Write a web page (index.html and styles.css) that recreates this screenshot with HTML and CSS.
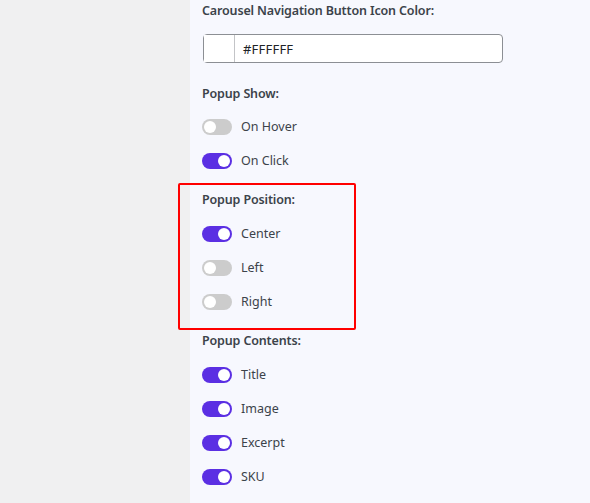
FILE: index.html
```html
<!DOCTYPE html>
<html>
<head>
<meta charset="utf-8">
<link rel="stylesheet" href="styles.css">
</head>
<body>
<div class="page">
  <aside class="side"></aside>
  <main class="panel">
    <section class="group first">
      <h3 class="heading">Carousel Navigation Button Icon Color:</h3>
      <div class="color-input">
        <span class="swatch"></span>
        <span class="value">#FFFFFF</span>
      </div>
    </section>

    <section class="group">
      <h3 class="heading">Popup Show:</h3>
      <div class="options tight">
        <label class="opt"><span class="toggle"></span>On Hover</label>
        <label class="opt"><span class="toggle on"></span>On Click</label>
      </div>
    </section>

    <section class="group highlighted">
      <h3 class="heading">Popup Position:</h3>
      <div class="options">
        <label class="opt"><span class="toggle on"></span>Center</label>
        <label class="opt"><span class="toggle"></span>Left</label>
        <label class="opt"><span class="toggle"></span>Right</label>
      </div>
    </section>

    <section class="group">
      <h3 class="heading">Popup Contents:</h3>
      <div class="options">
        <label class="opt"><span class="toggle on"></span>Title</label>
        <label class="opt"><span class="toggle on"></span>Image</label>
        <label class="opt"><span class="toggle on"></span>Excerpt</label>
        <label class="opt"><span class="toggle on"></span>SKU</label>
      </div>
    </section>
  </main>
</div>
</body>
</html>
```

FILE: styles.css
```css
* { box-sizing: border-box; }
html, body { margin: 0; padding: 0; }
body {
  background: #f0f0f1;
  font-family: "Noto Sans", "Open Sans", "DejaVu Sans", sans-serif;
  font-size: 12.5px;
  color: #3c434a;
  width: 590px;
  height: 503px;
  overflow: hidden;
}
.page {
  display: flex;
  height: 503px;
}
.side {
  width: 190px;
  flex: none;
  background: #f0f0f1;
}
.panel {
  flex: 1;
  background: #f7f8fe;
  padding: 1px 0 0 12px;
  display: flex;
  flex-direction: column;
  gap: 19px;
}
.panel .group.first + .group { margin-top: 2px; }
.group { position: relative; }
.heading {
  margin: 0;
  font-size: 12.5px;
  line-height: 20px;
  font-weight: 600;
  letter-spacing: -0.15px;
  color: #3c434a;
}
.color-input {
  margin-top: 13px;
  margin-left: 1px;
  width: 300px;
  height: 29px;
  border: 1px solid #8c8f94;
  border-radius: 4px;
  background: #fff;
  display: flex;
  align-items: center;
}
.swatch {
  width: 31px;
  height: 100%;
  border-right: 1px solid #c3c4c7;
  background: #fff;
}
.value {
  padding-left: 8px;
  font-size: 13px;
  color: #1d2327;
  letter-spacing: 0.2px;
}
.options {
  margin-top: 14px;
  display: flex;
  flex-direction: column;
  gap: 14px;
}
.options.tight { margin-top: 13px; }
.opt {
  display: flex;
  align-items: center;
  height: 20px;
  line-height: 20px;
  color: #3c434a;
}
.toggle {
  position: relative;
  width: 30px;
  height: 16px;
  border-radius: 8px;
  background: #cccccc;
  margin-right: 9px;
  flex: none;
}
.toggle::after {
  content: "";
  position: absolute;
  top: 2px;
  left: 2px;
  width: 12px;
  height: 12px;
  border-radius: 50%;
  background: #fff;
}
.toggle.on { background: #5b2fe3; }
.toggle.on::after { left: 16px; }
.highlighted::after {
  content: "";
  position: absolute;
  left: -24px;
  top: -7px;
  width: 174px;
  height: 143px;
  border: 2px solid #ff0000;
  border-radius: 2px;
  pointer-events: none;
}
```
